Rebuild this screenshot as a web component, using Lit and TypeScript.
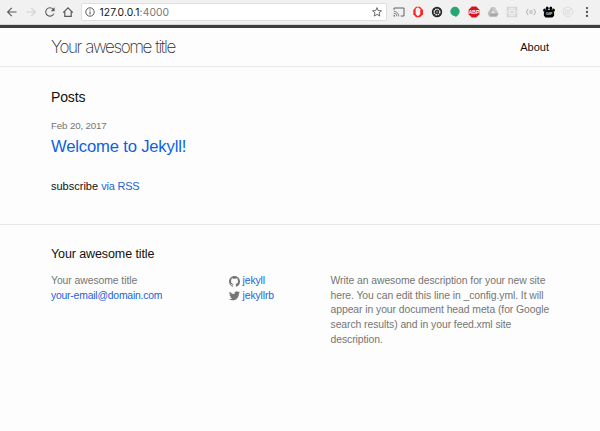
import { LitElement, html, css, svg } from "lit";
import { customElement, property } from "lit/decorators.js";

const icons: Record<string, unknown> = {
  back: svg`<path d="M10.5 6H1.8M5.8 1.8 1.6 6l4.2 4.2" fill="none" stroke="#5a5a5a" stroke-width="1.1"/>`,
  forward: svg`<path d="M1.5 6h8.7M6.2 1.8 10.4 6l-4.2 4.2" fill="none" stroke="#d2d2d2" stroke-width="1.1"/>`,
  reload: svg`<path d="M9.8 7.6A4.2 4.2 0 1 1 9.1 3.2" fill="none" stroke="#5a5a5a" stroke-width="1.1"/><path d="M10.6 1.3v4H6.7z" fill="#5a5a5a"/>`,
  home: svg`<path d="M1.2 6.7 6 1.9l4.8 4.8M2.8 5.4v4.9h6.4V5.4" fill="none" stroke="#5a5a5a" stroke-width="1.2"/>`,
  info: svg`<circle cx="6" cy="6" r="4.2" fill="none" stroke="#5a5a5a"/><path d="M6 5.4v3M6 3.4v1.1" stroke="#5a5a5a" stroke-width="1.1"/>`,
  star: svg`<path d="m6 1.6 1.2 3 3.3.2L8 6.9l.8 3.2L6 8.4l-2.8 1.7L4 6.9 1.5 4.8l3.3-.2z" fill="none" stroke="#5a5a5a" stroke-width=".9"/>`,
  cast: svg`<path d="M1 3.8V2h10v8H7.7" fill="none" stroke="#626262"/><path d="M.8 5.3a5 5 0 0 1 5 5M.8 7.2a3.1 3.1 0 0 1 3.1 3.1" fill="none" stroke="#777" stroke-width=".9"/><path d="M.6 8.8q1.6 0 1.6 1.6H.6z" fill="#666"/>`,
  opera: svg`<path d="M4 .7h4L11 4v4.2L8 11.3H4L1.3 8.2V4z" fill="#f22d29"/><path d="M3.7 3v4.2q.5 2.8 2.2 2.8T8.2 7.2V3.3Q7 1.6 6 1.6T3.7 3z" fill="#fff"/><path d="M5.2 2v4M6.6 1.8v4" stroke="#f6b5b0" stroke-width=".4"/>`,
  wheel: svg`<circle cx="6" cy="6" r="5.2" fill="#252525"/><circle cx="6" cy="6" r="2.8" fill="none" stroke="#f0f0f0" stroke-width="1.5" stroke-dasharray="1.45 .75"/><circle cx="6" cy="6" r="1.4" fill="#333"/><circle cx="6" cy="6" r=".7" fill="#ddd"/>`,
  pin: svg`<path d="M6 .8a4.7 4.7 0 0 1 4.7 4.6c0 2.4-2.2 4.4-4.4 5.9V9.9A4.6 4.6 0 0 1 1.3 5.4 4.7 4.7 0 0 1 6 .8z" fill="#26a771"/>`,
  abp: svg`<path d="M3.8.6h4.4l3.2 3.2v4.4l-3.2 3.2H3.8L.6 8.2V3.8z" fill="#d8141c"/><text x="6" y="7.9" text-anchor="middle" font-family="Liberation Sans, sans-serif" font-weight="700" font-size="5" fill="#fff">ABP</text>`,
  drive: svg`<path d="M4.3 1.3h3.4l3.7 6.2-1.7 3H2.3l-1.7-3z" fill="#b9b9b9"/><path d="m6 4.4 1.9 3.2H4.1z" fill="#efefef"/><path d="m4.3 1.3 3.6 6.2h3.5L7.7 1.3z" fill="#c9c9c9"/><path d="M4 7.6h7.4l-1.7 2.9H2.3z" fill="#a8a8a8"/>`,
  grid: svg`<path d="M.7.7h10.6v10.6H.7z" fill="#d6d6d6"/><g fill="none" stroke="#f5f5f5" stroke-width=".65"><ellipse cx="6" cy="6" rx="4.6" ry="1.8"/><ellipse cx="6" cy="6" rx="4.6" ry="1.8" transform="rotate(60 6 6)"/><ellipse cx="6" cy="6" rx="4.6" ry="1.8" transform="rotate(120 6 6)"/></g>`,
  braces: svg`<path d="M3.3 3.2q-1.1 0-1.1 1.3T1.2 6q1 0 1 1.4t1.1 1.3M8.7 3.2q1.1 0 1.1 1.3t1 1.5q-1 0-1 1.4T8.7 8.7M4.2 5h3.6M4.2 7h3.6" fill="none" stroke="#a5a5a5" stroke-width=".9"/>`,
  paw: svg`<ellipse cx="4.2" cy="2.3" rx="1.4" ry="1.9"/><ellipse cx="7.8" cy="2.3" rx="1.4" ry="1.9"/><ellipse cx="1.5" cy="4.2" rx="1.3" ry="1.6"/><ellipse cx="10.5" cy="4.2" rx="1.3" ry="1.6"/><path d="M3.2 4h5.6l2.3 2.2v3.6L9.4 11.4H2.6L.9 9.8V6.2z"/><text x="6" y="9.1" text-anchor="middle" font-family="Liberation Sans, sans-serif" font-weight="700" font-size="4" fill="#ddd">GIF</text>`,
  orbit: svg`<g fill="none" stroke="#d2d2d2" stroke-width=".7"><circle cx="6" cy="6" r="4.9"/><circle cx="5.6" cy="6.4" r="2.5"/><circle cx="5.6" cy="6.4" r=".7"/><path d="m1.4 1.6 2.2 2.6M7.3 4.6l2.6-2.8"/></g>`,
  menu: svg`<g fill="#505050"><circle cx="6" cy="2.1" r="1.15"/><circle cx="6" cy="6" r="1.15"/><circle cx="6" cy="9.9" r="1.15"/></g>`,
};

const github = svg`<path fill="#757575" d="M8 0C3.58 0 0 3.58 0 8c0 3.54 2.29 6.53 5.47 7.59.4.07.55-.17.55-.38 0-.19-.01-.82-.01-1.49-2.01.37-2.53-.49-2.69-.94-.09-.23-.48-.94-.82-1.13-.28-.15-.68-.52-.01-.53.63-.01 1.08.58 1.23.82.72 1.21 1.87.87 2.33.66.07-.52.28-.87.51-1.07-1.78-.2-3.64-.89-3.64-3.95 0-.87.31-1.59.82-2.15-.08-.2-.36-1.02.08-2.12 0 0 .67-.21 2.2.82.64-.18 1.32-.27 2-.27s1.36.09 2 .27c1.53-1.04 2.2-.82 2.2-.82.44 1.1.16 1.92.08 2.12.51.56.82 1.27.82 2.15 0 3.07-1.87 3.75-3.65 3.95.29.25.54.73.54 1.48 0 1.07-.01 1.93-.01 2.2 0 .21.15.46.55.38A8.01 8.01 0 0 0 16 8c0-4.42-3.58-8-8-8z"/>`;
const twitter = svg`<path fill="#757575" d="M16 3.54a6.6 6.6 0 0 1-1.89.52 3.3 3.3 0 0 0 1.45-1.82 6.5 6.5 0 0 1-2.08.8A3.28 3.28 0 0 0 7.88 6.03 9.32 9.32 0 0 1 1.11 2.6a3.28 3.28 0 0 0 1.02 4.38 3.3 3.3 0 0 1-1.49-.41v.04a3.28 3.28 0 0 0 2.63 3.22 3.3 3.3 0 0 1-1.48.06 3.28 3.28 0 0 0 3.07 2.28A6.6 6.6 0 0 1 0 13.53a9.3 9.3 0 0 0 5.03 1.47c6.04 0 9.34-5 9.34-9.34l-.01-.42A6.7 6.7 0 0 0 16 3.54z"/>`;

@customElement("tool-icon")
class ToolIcon extends LitElement {
  @property() name = "";
  static styles = css`
    :host { display: block; flex: none; width: 12px; height: 12px; }
    svg { display: block; width: 12px; height: 12px; }
  `;
  render() {
    return html`<svg viewBox="0 0 12 12">${icons[this.name]}</svg>`;
  }
}

@customElement("browser-bar")
class BrowserBar extends LitElement {
  static styles = css`
    :host { display: block; }
    .bar { display: flex; align-items: center; box-sizing: border-box; height: 24px; padding: 0 6px; background: #f1f1f1; }
    .nav { display: flex; gap: 6.8px; width: 75px; }
    .address { display: flex; align-items: center; box-sizing: border-box; width: 306px; height: 18px; padding: 0 3px 0 2px; background: #fff; border: 1px solid #dedede; border-radius: 2px; }
    .url { flex: 1; margin-left: 3.5px; padding-top: 1px; font: 10.3px/15px Inter, sans-serif; letter-spacing: 0.1px; color: #777; }
    .host { color: #111; }
    .tools { display: flex; gap: 6.8px; margin-left: 6px; }
    .shade { height: 4px; background: linear-gradient(#d5d5d5 0 1px, #3c3e3f 1px 4px); }
  `;
  render() {
    const tools = ["cast", "opera", "wheel", "pin", "abp", "drive", "grid", "braces", "paw", "orbit", "menu"];
    return html`
      <div class="bar">
        <div class="nav">${["back", "forward", "reload", "home"].map((n) => html`<tool-icon name=${n}></tool-icon>`)}</div>
        <div class="address">
          <tool-icon name="info"></tool-icon>
          <div class="url"><span class="host">127.0.0.1</span>:4000</div>
          <tool-icon name="star"></tool-icon>
        </div>
        <div class="tools">${tools.map((n) => html`<tool-icon name=${n}></tool-icon>`)}</div>
      </div>
      <div class="shade"></div>
    `;
  }
}

@customElement("app-root")
class AppRoot extends LitElement {
  static styles = css`
    :host { display: flex; flex-direction: column; height: 431px; overflow: hidden; background: #fdfdfd; color: #111; font: 11px/16px "Liberation Sans", Arial, sans-serif; }
    a { color: #2263dc; text-decoration: none; }
    h1, h2, p { margin: 0; font-weight: 400; }
    .header { display: flex; align-items: center; justify-content: space-between; box-sizing: border-box; height: 39px; padding: 0 51px; border-bottom: 1px solid #e8e8e8; }
    .brand { font: 200 17px/20px Inter, sans-serif; letter-spacing: -1.4px; word-spacing: 0.9px; color: #303030; }
    .main { box-sizing: border-box; height: 157px; padding: 20px 51px 0; }
    .posts { font-size: 14px; line-height: 20px; letter-spacing: -0.15px; }
    .date { margin-top: 11px; font-size: 9.8px; line-height: 16px; letter-spacing: -0.18px; color: #757575; }
    .post { display: block; padding-top: 1px; font-size: 16.6px; line-height: 24px; letter-spacing: -0.16px; color: #0d62e0; }
    .subscribe { margin-top: 19px; }
    .subscribe a { letter-spacing: -0.2px; }
    .footer { padding: 20px 51px 0; border-top: 1px solid #e8e8e8; }
    .footer-title { font-size: 12.5px; line-height: 19px; letter-spacing: -0.1px; }
    .columns { display: grid; grid-template-columns: 178px 101.5px 1fr; margin-top: 9.8px; font-size: 10.4px; line-height: 14.8px; letter-spacing: -0.07px; color: #757575; }
    .email { letter-spacing: -0.21px; }
    .social { display: flex; align-items: center; gap: 2.5px; height: 14.8px; }
    .social svg { width: 11px; height: 11px; }
    .social a { letter-spacing: -0.1px; }
    .description { white-space: nowrap; }
  `;
  render() {
    return html`
      <browser-bar></browser-bar>
      <header class="header"><a class="brand">Your awesome title</a><span>About</span></header>
      <main class="main">
        <h1 class="posts">Posts</h1>
        <div class="date">Feb 20, 2017</div>
        <h2><a class="post">Welcome to Jekyll!</a></h2>
        <p class="subscribe">subscribe <a>via RSS</a></p>
      </main>
      <footer class="footer">
        <h2 class="footer-title">Your awesome title</h2>
        <div class="columns">
          <div>Your awesome title<br /><a class="email">your-email@domain.com</a></div>
          <div>
            <div class="social"><svg viewBox="0 0 16 16">${github}</svg><a>jekyll</a></div>
            <div class="social"><svg viewBox="0 0 16 16">${twitter}</svg><a>jekyllrb</a></div>
          </div>
          <p class="description">
            Write an awesome description for your new site<br />here. You can edit this line in _config.yml. It will<br />appear in your document head meta (for Google<br />search results) and in your feed.xml site<br />description.
          </p>
        </div>
      </footer>
    `;
  }
}
